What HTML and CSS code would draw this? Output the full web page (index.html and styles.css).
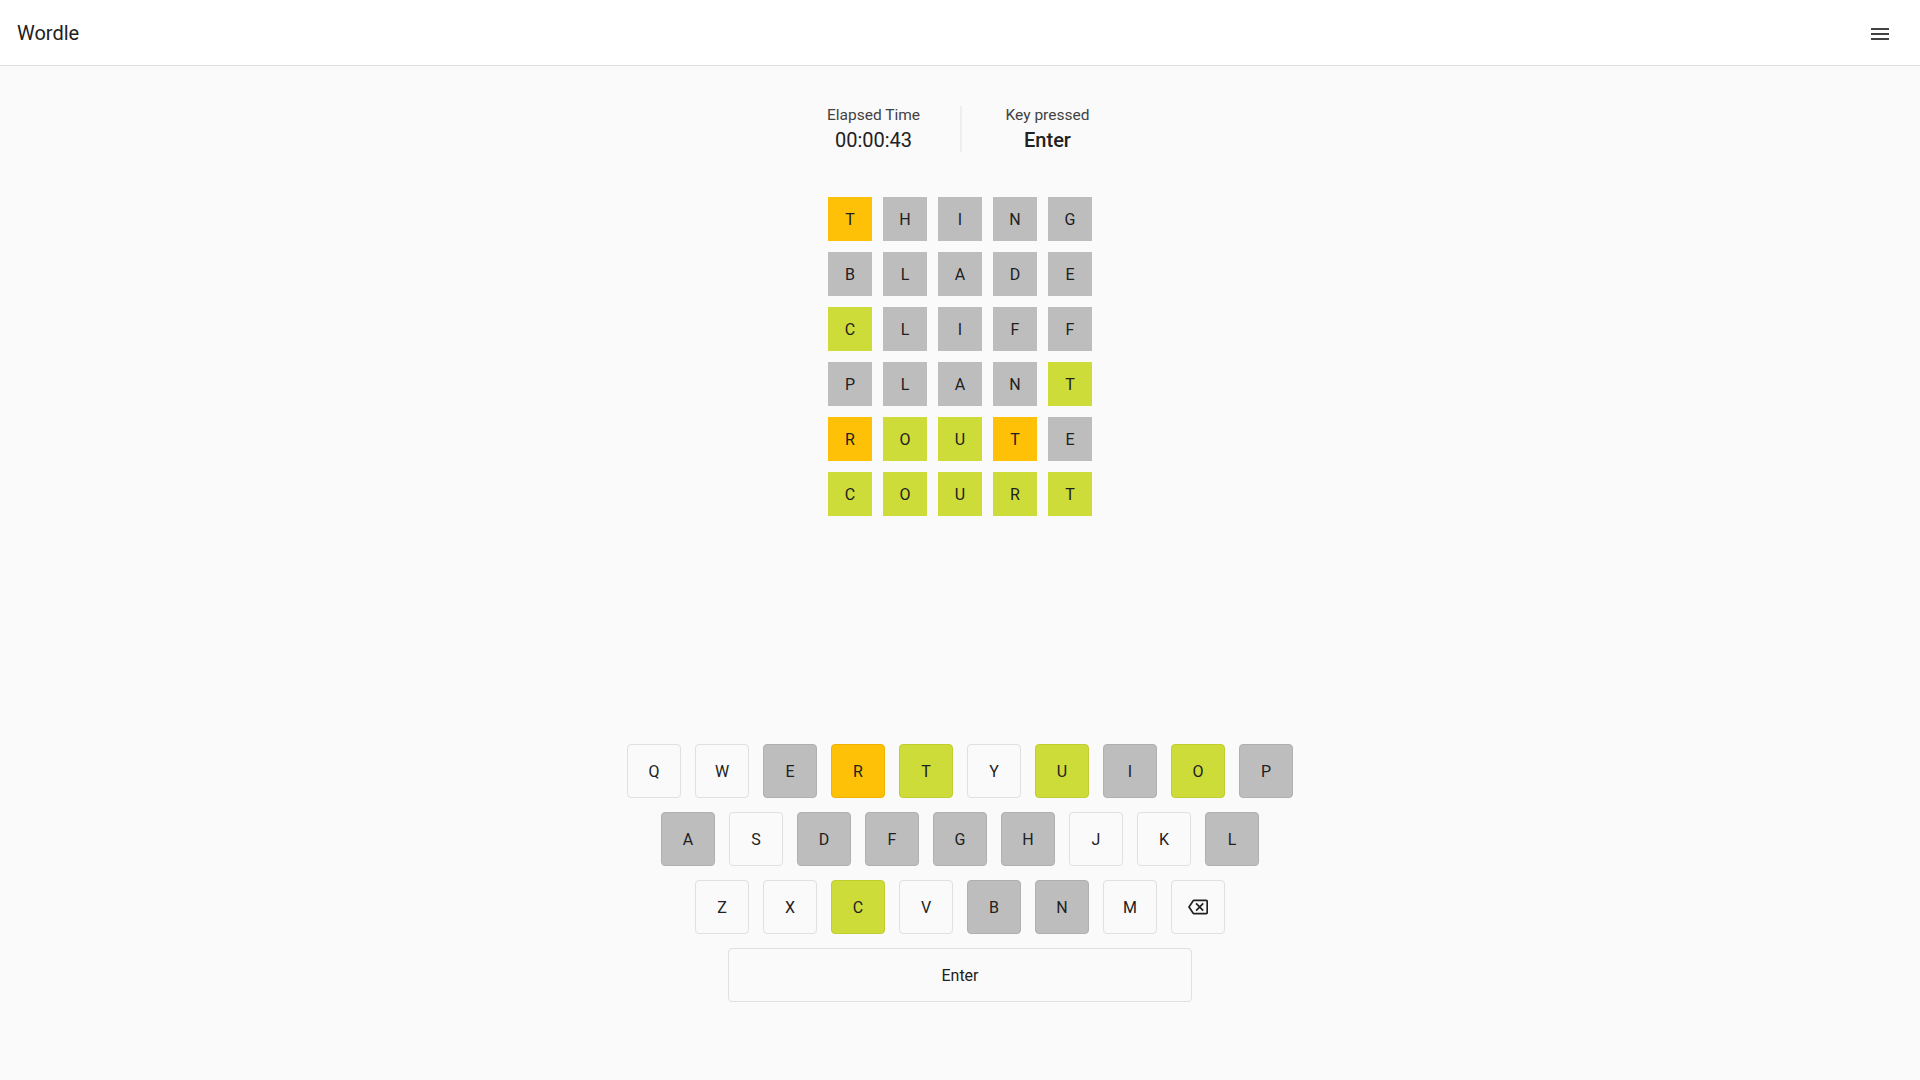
FILE: index.html
```html
<!DOCTYPE html>
<html lang="en">
<head>
  <meta charset="UTF-8" />
  <meta name="viewport" content="width=device-width, initial-scale=1.0" />
  <title>Wordle</title>
  <link rel="stylesheet" href="styles.css">
</head>
<body>
  <header class="app-bar">
    <div class="app-title">Wordle</div>
    <button class="menu-button" aria-label="Menu">
      <svg width="24" height="24" viewBox="0 0 24 24"><path d="M3 18h18v-2H3v2zm0-5h18v-2H3v2zm0-7v2h18V6H3z" fill="#424242"/></svg>
    </button>
  </header>

  <main class="game">
    <div class="stats">
      <div class="stat">
        <div class="stat-label">Elapsed Time</div>
        <div class="stat-value">00:00:43</div>
      </div>
      <div class="stat">
        <div class="stat-label">Key pressed</div>
        <div class="stat-value">Enter</div>
      </div>
    </div>

    <div class="board">
      <div class="tile present">T</div><div class="tile absent">H</div><div class="tile absent">I</div><div class="tile absent">N</div><div class="tile absent">G</div>
      <div class="tile absent">B</div><div class="tile absent">L</div><div class="tile absent">A</div><div class="tile absent">D</div><div class="tile absent">E</div>
      <div class="tile correct">C</div><div class="tile absent">L</div><div class="tile absent">I</div><div class="tile absent">F</div><div class="tile absent">F</div>
      <div class="tile absent">P</div><div class="tile absent">L</div><div class="tile absent">A</div><div class="tile absent">N</div><div class="tile correct">T</div>
      <div class="tile present">R</div><div class="tile correct">O</div><div class="tile correct">U</div><div class="tile present">T</div><div class="tile absent">E</div>
      <div class="tile correct">C</div><div class="tile correct">O</div><div class="tile correct">U</div><div class="tile correct">R</div><div class="tile correct">T</div>
    </div>

    <div class="keyboard">
      <div class="key-row">
        <button class="key">Q</button>
        <button class="key">W</button>
        <button class="key absent">E</button>
        <button class="key present">R</button>
        <button class="key correct">T</button>
        <button class="key">Y</button>
        <button class="key correct">U</button>
        <button class="key absent">I</button>
        <button class="key correct">O</button>
        <button class="key absent">P</button>
      </div>
      <div class="key-row">
        <button class="key absent">A</button>
        <button class="key">S</button>
        <button class="key absent">D</button>
        <button class="key absent">F</button>
        <button class="key absent">G</button>
        <button class="key absent">H</button>
        <button class="key">J</button>
        <button class="key">K</button>
        <button class="key absent">L</button>
      </div>
      <div class="key-row">
        <button class="key">Z</button>
        <button class="key">X</button>
        <button class="key correct">C</button>
        <button class="key">V</button>
        <button class="key absent">B</button>
        <button class="key absent">N</button>
        <button class="key">M</button>
        <button class="key" aria-label="Backspace">
          <svg width="20" height="20" viewBox="0 0 24 24"><path d="M22 3H7c-.69 0-1.23.35-1.59.88L0 12l5.41 8.11c.36.53.9.89 1.59.89h15c1.1 0 2-.9 2-2V5c0-1.1-.9-2-2-2zm0 16H7.07L2.4 12l4.66-7H22v14zm-11.59-2L14 13.41 17.59 17 19 15.59 15.41 12 19 8.41 17.59 7 14 10.59 10.41 7 9 8.41 12.59 12 9 15.59z" fill="#212121"/></svg>
        </button>
      </div>
      <div class="key-row">
        <button class="key enter">Enter</button>
      </div>
    </div>
  </main>
</body>
</html>
```

FILE: styles.css
```css
* {
  box-sizing: border-box;
}

body {
  margin: 0;
  font-family: 'Roboto', 'Liberation Sans', sans-serif;
  background: #fafafa;
  color: #212121;
}

.app-bar {
  height: 66px;
  background: #fff;
  border-bottom: 1px solid #e0e0e0;
  display: flex;
  align-items: center;
  justify-content: space-between;
  padding: 0 16px 0 17px;
}

.app-title {
  font-size: 20px;
  font-weight: 400;
}

.menu-button {
  background: none;
  border: none;
  padding: 12px;
  margin-top: 2px;
  display: flex;
  cursor: pointer;
}

.game {
  min-height: calc(100vh - 66px);
  display: flex;
  flex-direction: column;
  align-items: center;
  padding: 40px 0 78px;
}

.stats {
  display: flex;
}

.stat {
  width: 173px;
  text-align: center;
}

.stat + .stat {
  border-left: 2px solid #eeeeee;
}

.stat-label {
  font-size: 15.5px;
  color: #424242;
}

.stat-value {
  font-size: 20px;
  font-weight: 400;
  margin-top: 4px;
}

.stat + .stat .stat-value {
  font-weight: 500;
}

.board {
  display: grid;
  grid-template-columns: repeat(5, 44px);
  grid-auto-rows: 44px;
  gap: 11px;
  margin-top: 45px;
}

.tile {
  display: flex;
  align-items: center;
  justify-content: center;
  font-size: 16px;
  font-weight: 400;
}

.tile.absent { background: #bdbdbd; }
.tile.present { background: #ffc107; }
.tile.correct { background: #cddc39; }

.keyboard {
  margin-top: auto;
  display: flex;
  flex-direction: column;
  gap: 14px;
}

.key-row {
  display: flex;
  justify-content: center;
  gap: 14px;
}

.key {
  width: 54px;
  height: 54px;
  border: 1px solid #e0e0e0;
  border-radius: 4px;
  background: #fafafa;
  font-family: inherit;
  font-size: 16px;
  color: #212121;
  display: flex;
  align-items: center;
  justify-content: center;
  padding: 0;
  cursor: pointer;
}

.key.absent { background: #bdbdbd; border-color: #b0b0b0; }
.key.present { background: #ffc107; border-color: #f0b400; }
.key.correct { background: #cddc39; border-color: #c0ce30; }

.key.enter {
  width: 464px;
}
```
